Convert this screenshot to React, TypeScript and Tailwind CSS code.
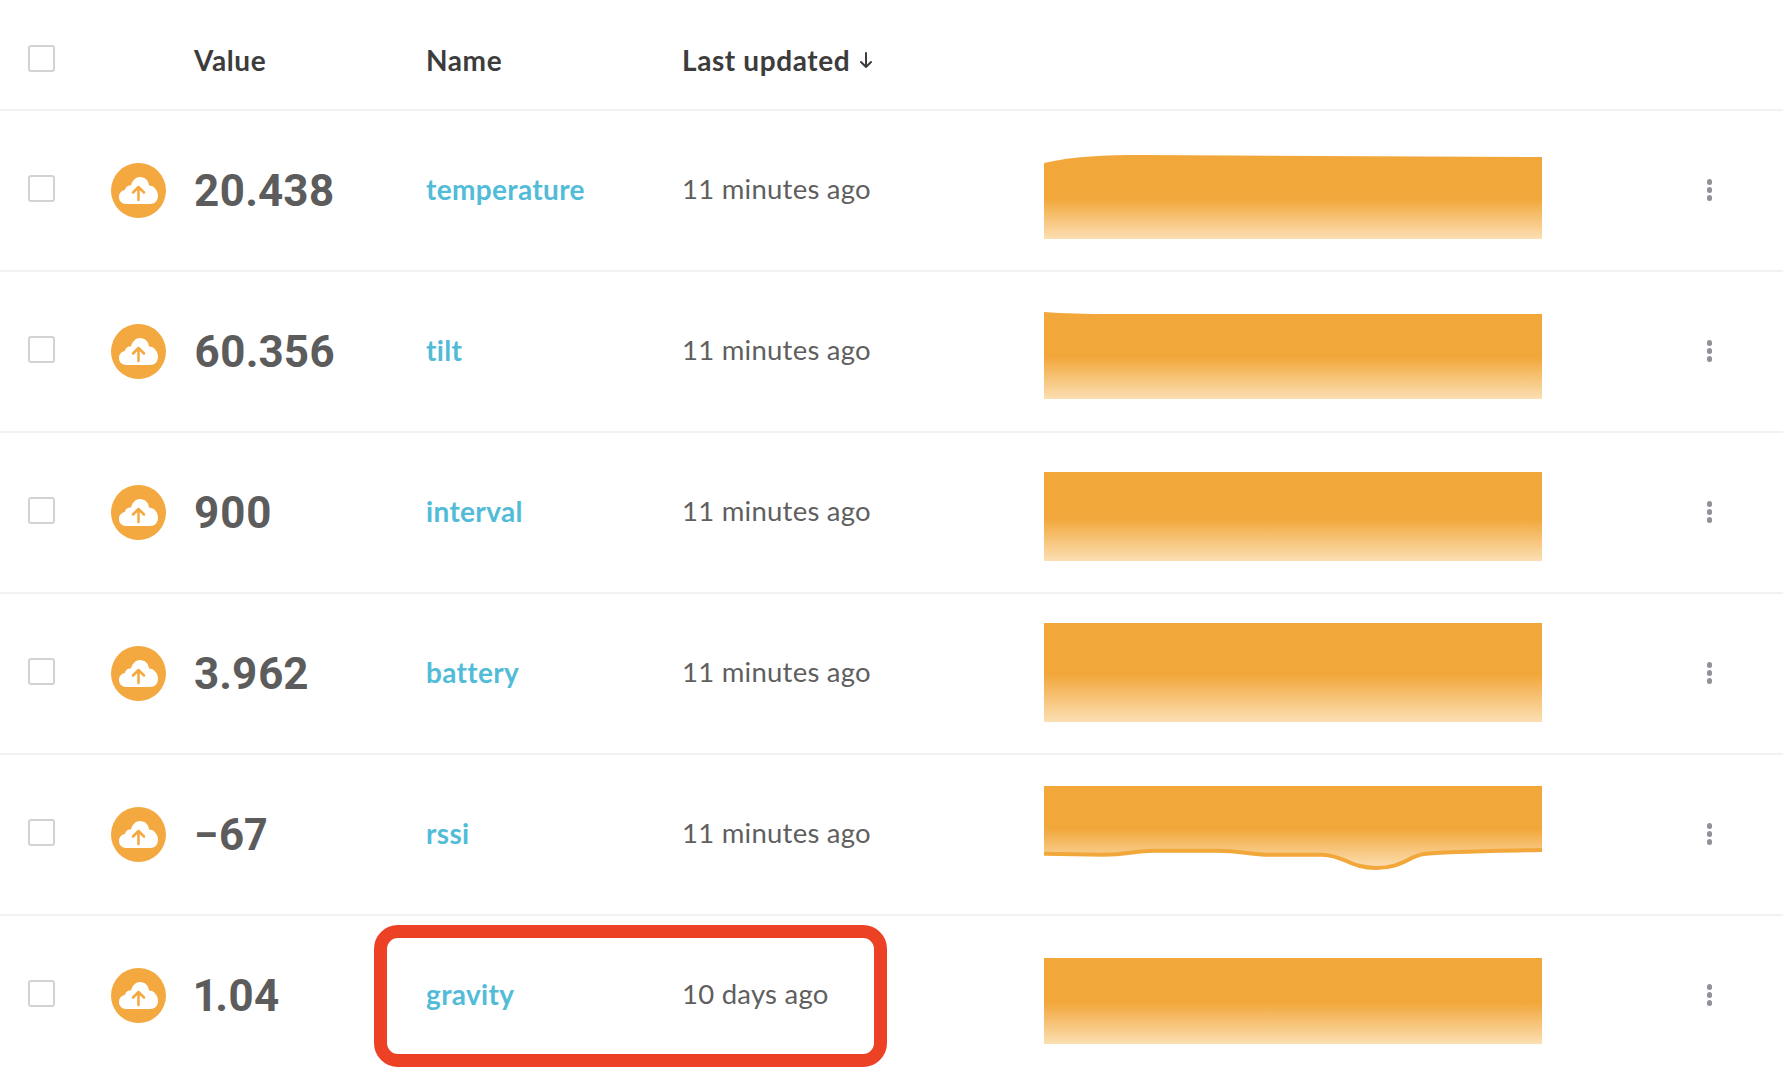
const rows = [
  { value: '20.438', name: 'temperature', time: '11 minutes ago', d: 'M0 52C30 45 60 44 100 44L498 46V128H0Z' },
  { value: '60.356', name: 'tilt', time: '11 minutes ago', d: 'M0 40C20 41.500 40 42 70 42H498V127H0Z' },
  { value: '900', name: 'interval', time: '11 minutes ago', d: 'M0 39H498V128H0Z' },
  { value: '3.962', name: 'battery', time: '11 minutes ago', d: 'M0 29H498V128H0Z' },
  {
    value: '−67',
    name: 'rssi',
    time: '11 minutes ago',
    d: 'M0 31H498V95C450 96 400 96.500 380 99C365 101 358 113 332 113C306 113 300 100 278 99.700H225C205 99.700 200 95.700 171 95.700H110C90 95.700 85 99.700 59 99.700L0 98.700Z',
    line: 'M0 98.700L59 99.700C85 99.700 90 95.700 110 95.700H171C200 95.700 205 99.700 225 99.700H278C300 100 306 113 332 113C358 113 365 101 380 99C400 96.500 450 96 498 95',
  },
  { value: '1.04', name: 'gravity', time: '10 days ago', d: 'M0 42H498V128H0Z' },
]

function CloudBadge() {
  return (
    <svg viewBox="0 0 55 55" className="w-[55px] h-[55px]">
      <circle cx="27.500" cy="27.500" r="27.500" fill="#f3a93f" />
      <path
        d="M15 41C11 41 8 38 8 34C8 30 10.500 27.500 14 27C14.500 23.500 17 22 20 22.500C21.500 17 25 14 29 14C34 14 37.500 17.500 38 22.500C43 22.500 47 27.500 47 32.500C47 37.500 44 41 39 41Z"
        fill="#fff"
      />
      <path d="M27.500 37V24M22 29.500L27.500 24L33 29.500" fill="none" stroke="#f3a93f" strokeWidth="2.500" strokeLinecap="round" strokeLinejoin="round" />
    </svg>
  )
}

function Checkbox() {
  return <div className="w-[27px] h-[27px] rounded-[3px] border-2 border-[#d2d2d2] bg-white" />
}

function Spark({ d, line, id }: { d: string; line?: string; id: string }) {
  return (
    <svg viewBox="0 0 498 159" className="w-[498px] h-[159px] self-start">
      <defs>
        <linearGradient id={id} x1="0" y1="0" x2="0" y2="1">
          <stop offset="0.52" stopColor="#f2a73b" />
          <stop offset="1" stopColor="#fbdfb3" />
        </linearGradient>
      </defs>
      <path d={d} fill={`url(#${id})`} />
      {line && <path d={line} fill="none" stroke="#f2a73b" strokeWidth="4" />}
    </svg>
  )
}

export default function App() {
  return (
    <div className="relative w-[1783px] h-[1080px] overflow-hidden bg-white font-['Lato','Noto_Sans',sans-serif]">
      <div className="h-[111px] pt-[10px] grid grid-cols-[111px_83px_232px_256px_1fr] items-center border-b-2 border-[#f2f2f3] text-[28px] font-bold tracking-[0.6px] text-[#3c3c3c]">
        <div className="pl-[28px] -mt-[2px]"><Checkbox /></div>
        <div />
        <div>Value</div>
        <div>Name</div>
        <div className="whitespace-nowrap flex items-center">
          Last updated
          <svg viewBox="0 0 14 18" className="w-[14px] h-[18px] ml-[9px]">
            <path d="M7 2V16M2 11L7 16L12 11" fill="none" stroke="#3c3c3c" strokeWidth="2" strokeLinecap="round" strokeLinejoin="round" />
          </svg>
        </div>
      </div>
      {rows.map((r, i) => (
        <div
          key={r.name}
          className={`h-[161px] pb-[2px] grid grid-cols-[111px_83px_232px_256px_362px_498px_1fr] items-center ${i < 5 ? 'border-b-2 border-[#f2f2f3]' : ''}`}
        >
          <div className="pl-[28px] -mt-[5px]"><Checkbox /></div>
          <CloudBadge />
          <div className="text-[44px] font-bold proportional-nums text-[#5c5c5c] font-['Roboto',sans-serif]">{r.value}</div>
          <div className="text-[28px] -mt-[4px] font-bold tracking-[0.35px] text-[#52bcd8]">{r.name}</div>
          <div className="text-[27.500px] -mt-[4px] tracking-[0.25px] text-[#5f5f5f] whitespace-nowrap">{r.time}</div>
          <Spark d={r.d} line={r.line} id={`fade-${i}`} />
          <div className="flex flex-col items-center gap-[2px] w-[5px] ml-[165px] -mt-[2px]">
            <span className="w-[5px] h-[6px] rounded-full bg-[#8f9296]" />
            <span className="w-[5px] h-[6px] rounded-full bg-[#8f9296]" />
            <span className="w-[5px] h-[6px] rounded-full bg-[#8f9296]" />
          </div>
        </div>
      ))}
      <div className="absolute left-[374px] top-[925px] w-[513px] h-[142px] rounded-[24px] border-[13px] border-[#ec4125]" />
    </div>
  )
}
